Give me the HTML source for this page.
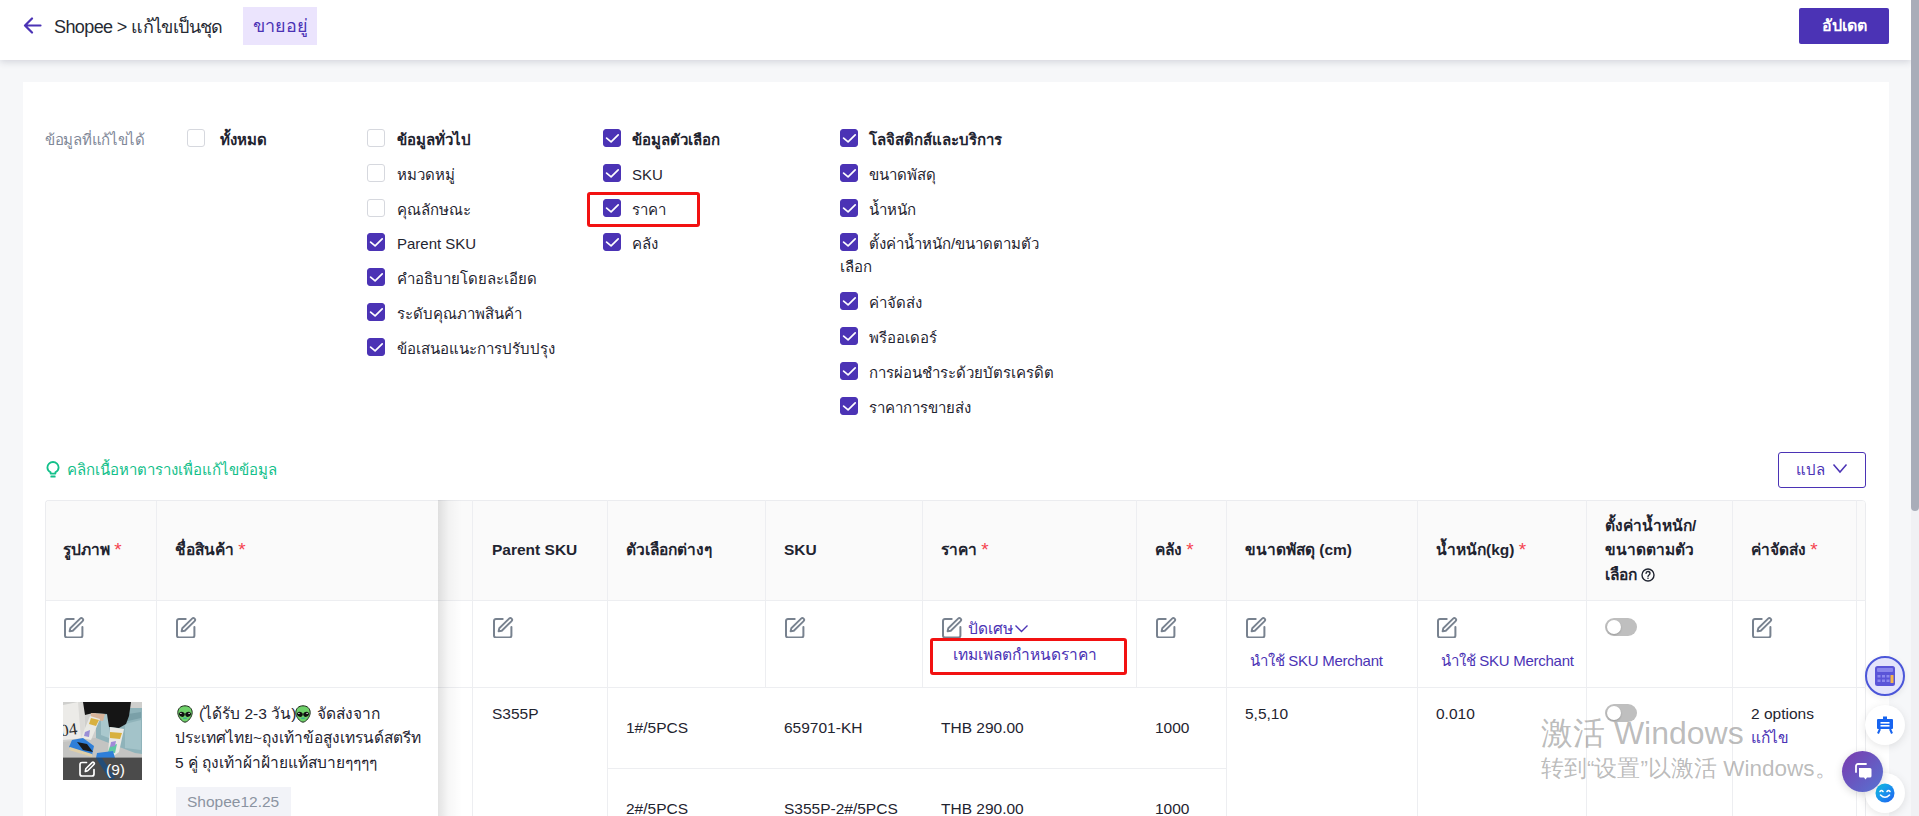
<!DOCTYPE html>
<html><head><meta charset="utf-8">
<style>
*{box-sizing:border-box;margin:0;padding:0}
html,body{width:1919px;height:816px;overflow:hidden}
body{position:relative;background:#f6f7f9;font-family:"Liberation Sans",sans-serif;color:#1f2430;font-size:15px}
.a{position:absolute;white-space:nowrap}
#hdr{left:0;top:0;width:1911px;height:60px;background:#fff;box-shadow:0 2px 7px rgba(30,40,70,.16);z-index:5}
#sb{left:1911px;top:0;width:8px;height:816px;background:#f0f1f4;z-index:6}
#thumb{left:0;top:0;width:8px;height:511px;background:#a9adb9;border-radius:0 0 4px 4px}
#card{left:23px;top:82px;width:1866px;height:740px;background:#fff}
.cb{position:absolute;width:18px;height:18px;border-radius:3px;border:1px solid #d6d8de;background:#fff}
.cb.on{background:#4b33b5;border-color:#4b33b5}
.lbl{position:absolute;white-space:nowrap;font-size:15px;line-height:20px;color:#1f2430;margin-top:2px}
.b{font-weight:bold}
.hl{height:1px;background:#edeef1}
.vl{width:1px;background:#edeef1}
.th{position:absolute;white-space:nowrap;font-size:15.5px;line-height:20px;font-weight:bold;color:#1f2430;margin-top:1px}
.req{color:#f5434f;font-size:19px;font-weight:normal;vertical-align:-1px}
.td{position:absolute;white-space:nowrap;font-size:15.5px;line-height:20px;color:#1f2430;margin-top:1px}
.tog{position:absolute;width:32px;height:18px;border-radius:9px;background:#bfbfbf}
.tog::after{content:"";position:absolute;left:2px;top:2px;width:14px;height:14px;border-radius:50%;background:#fff;box-shadow:0 1px 2px rgba(0,0,0,.2)}
</style></head><body>

<div id="hdr" class="a">
  <svg class="a" style="left:23px;top:17px" width="19" height="17" viewBox="0 0 19 17"><path d="M9 1.5 2 8.5l7 7M2.5 8.5H17.5" fill="none" stroke="#4b33b5" stroke-width="2.2" stroke-linecap="round" stroke-linejoin="round"/></svg>
  <div class="a" style="left:54px;top:16px;font-size:18px;line-height:22px;color:#262a33;letter-spacing:-0.6px">Shopee &gt; แก้ไขเป็นชุด</div>
  <div class="a" style="left:243px;top:7px;width:74px;height:38px;background:#ebe4fd;color:#4b33b5;font-size:18px;line-height:38px;text-align:center">ขายอยู่</div>
  <div class="a" style="left:1799px;top:8px;width:90px;height:36px;background:#4b33b5;border-radius:2px;color:#fff;font-size:16px;font-weight:bold;line-height:36px;text-align:center">อัปเดต</div>
</div>

<div id="card" class="a"></div>
<div class="lbl" style="left:45px;top:128px;color:#7f8898;letter-spacing:-0.3px">ข้อมูลที่แก้ไขได้</div>
<div class="cb" style="left:187px;top:129px"></div><div class="lbl b" style="left:220px;top:128px">ทั้งหมด</div>
<div class="cb" style="left:367px;top:129px"></div><div class="lbl b" style="left:397px;top:128px">ข้อมูลทั่วไป</div>
<div class="cb" style="left:367px;top:164px"></div><div class="lbl" style="left:397px;top:163px">หมวดหมู่</div>
<div class="cb" style="left:367px;top:199px"></div><div class="lbl" style="left:397px;top:198px">คุณลักษณะ</div>
<div class="cb on" style="left:367px;top:233px"><svg width="18" height="18" viewBox="0 0 18 18" style="position:absolute;left:-1px;top:-1px"><path d="M3.6 9.1 8.1 12.8 15.2 5.9" fill="none" stroke="#fff" stroke-width="1.7" stroke-linecap="round" stroke-linejoin="round"/></svg></div><div class="lbl" style="left:397px;top:232px">Parent SKU</div>
<div class="cb on" style="left:367px;top:268px"><svg width="18" height="18" viewBox="0 0 18 18" style="position:absolute;left:-1px;top:-1px"><path d="M3.6 9.1 8.1 12.8 15.2 5.9" fill="none" stroke="#fff" stroke-width="1.7" stroke-linecap="round" stroke-linejoin="round"/></svg></div><div class="lbl" style="left:397px;top:267px">คำอธิบายโดยละเอียด</div>
<div class="cb on" style="left:367px;top:303px"><svg width="18" height="18" viewBox="0 0 18 18" style="position:absolute;left:-1px;top:-1px"><path d="M3.6 9.1 8.1 12.8 15.2 5.9" fill="none" stroke="#fff" stroke-width="1.7" stroke-linecap="round" stroke-linejoin="round"/></svg></div><div class="lbl" style="left:397px;top:302px">ระดับคุณภาพสินค้า</div>
<div class="cb on" style="left:367px;top:338px"><svg width="18" height="18" viewBox="0 0 18 18" style="position:absolute;left:-1px;top:-1px"><path d="M3.6 9.1 8.1 12.8 15.2 5.9" fill="none" stroke="#fff" stroke-width="1.7" stroke-linecap="round" stroke-linejoin="round"/></svg></div><div class="lbl" style="left:397px;top:337px">ข้อเสนอแนะการปรับปรุง</div>
<div class="cb on" style="left:603px;top:129px"><svg width="18" height="18" viewBox="0 0 18 18" style="position:absolute;left:-1px;top:-1px"><path d="M3.6 9.1 8.1 12.8 15.2 5.9" fill="none" stroke="#fff" stroke-width="1.7" stroke-linecap="round" stroke-linejoin="round"/></svg></div><div class="lbl b" style="left:632px;top:128px">ข้อมูลตัวเลือก</div>
<div class="cb on" style="left:603px;top:164px"><svg width="18" height="18" viewBox="0 0 18 18" style="position:absolute;left:-1px;top:-1px"><path d="M3.6 9.1 8.1 12.8 15.2 5.9" fill="none" stroke="#fff" stroke-width="1.7" stroke-linecap="round" stroke-linejoin="round"/></svg></div><div class="lbl" style="left:632px;top:163px">SKU</div>
<div class="cb on" style="left:603px;top:199px"><svg width="18" height="18" viewBox="0 0 18 18" style="position:absolute;left:-1px;top:-1px"><path d="M3.6 9.1 8.1 12.8 15.2 5.9" fill="none" stroke="#fff" stroke-width="1.7" stroke-linecap="round" stroke-linejoin="round"/></svg></div><div class="lbl" style="left:632px;top:198px">ราคา</div>
<div class="cb on" style="left:603px;top:233px"><svg width="18" height="18" viewBox="0 0 18 18" style="position:absolute;left:-1px;top:-1px"><path d="M3.6 9.1 8.1 12.8 15.2 5.9" fill="none" stroke="#fff" stroke-width="1.7" stroke-linecap="round" stroke-linejoin="round"/></svg></div><div class="lbl" style="left:632px;top:232px">คลัง</div>
<div class="cb on" style="left:840px;top:129px"><svg width="18" height="18" viewBox="0 0 18 18" style="position:absolute;left:-1px;top:-1px"><path d="M3.6 9.1 8.1 12.8 15.2 5.9" fill="none" stroke="#fff" stroke-width="1.7" stroke-linecap="round" stroke-linejoin="round"/></svg></div><div class="lbl b" style="left:869px;top:128px">โลจิสติกส์และบริการ</div>
<div class="cb on" style="left:840px;top:164px"><svg width="18" height="18" viewBox="0 0 18 18" style="position:absolute;left:-1px;top:-1px"><path d="M3.6 9.1 8.1 12.8 15.2 5.9" fill="none" stroke="#fff" stroke-width="1.7" stroke-linecap="round" stroke-linejoin="round"/></svg></div><div class="lbl" style="left:869px;top:163px">ขนาดพัสดุ</div>
<div class="cb on" style="left:840px;top:199px"><svg width="18" height="18" viewBox="0 0 18 18" style="position:absolute;left:-1px;top:-1px"><path d="M3.6 9.1 8.1 12.8 15.2 5.9" fill="none" stroke="#fff" stroke-width="1.7" stroke-linecap="round" stroke-linejoin="round"/></svg></div><div class="lbl" style="left:869px;top:198px">น้ำหนัก</div>
<div class="cb on" style="left:840px;top:233px"><svg width="18" height="18" viewBox="0 0 18 18" style="position:absolute;left:-1px;top:-1px"><path d="M3.6 9.1 8.1 12.8 15.2 5.9" fill="none" stroke="#fff" stroke-width="1.7" stroke-linecap="round" stroke-linejoin="round"/></svg></div><div class="lbl" style="left:869px;top:232px">ตั้งค่าน้ำหนัก/ขนาดตามตัว</div>
<div class="cb on" style="left:840px;top:292px"><svg width="18" height="18" viewBox="0 0 18 18" style="position:absolute;left:-1px;top:-1px"><path d="M3.6 9.1 8.1 12.8 15.2 5.9" fill="none" stroke="#fff" stroke-width="1.7" stroke-linecap="round" stroke-linejoin="round"/></svg></div><div class="lbl" style="left:869px;top:291px">ค่าจัดส่ง</div>
<div class="cb on" style="left:840px;top:327px"><svg width="18" height="18" viewBox="0 0 18 18" style="position:absolute;left:-1px;top:-1px"><path d="M3.6 9.1 8.1 12.8 15.2 5.9" fill="none" stroke="#fff" stroke-width="1.7" stroke-linecap="round" stroke-linejoin="round"/></svg></div><div class="lbl" style="left:869px;top:326px">พรีออเดอร์</div>
<div class="cb on" style="left:840px;top:362px"><svg width="18" height="18" viewBox="0 0 18 18" style="position:absolute;left:-1px;top:-1px"><path d="M3.6 9.1 8.1 12.8 15.2 5.9" fill="none" stroke="#fff" stroke-width="1.7" stroke-linecap="round" stroke-linejoin="round"/></svg></div><div class="lbl" style="left:869px;top:361px">การผ่อนชำระด้วยบัตรเครดิต</div>
<div class="cb on" style="left:840px;top:397px"><svg width="18" height="18" viewBox="0 0 18 18" style="position:absolute;left:-1px;top:-1px"><path d="M3.6 9.1 8.1 12.8 15.2 5.9" fill="none" stroke="#fff" stroke-width="1.7" stroke-linecap="round" stroke-linejoin="round"/></svg></div><div class="lbl" style="left:869px;top:396px">ราคาการขายส่ง</div>
<div class="lbl" style="left:840px;top:255px">เลือก</div>
<div class="a" style="left:587px;top:192px;width:113px;height:35px;border:3px solid #f21111;border-radius:3px"></div>
<!-- tip -->
<svg class="a" style="left:46px;top:461px" width="14" height="18" viewBox="0 0 14 18"><path d="M4.6 12.6V11.3C2.7 10.3 1.4 8.6 1.4 6.5 1.4 3.4 3.9 1 7 1s5.6 2.4 5.6 5.5c0 2.1-1.3 3.8-3.2 4.8v1.3z" fill="none" stroke="#13c08a" stroke-width="1.8" stroke-linejoin="round"/><rect x="4.4" y="14.6" width="5.2" height="2" rx=".6" fill="#13c08a"/></svg>
<div class="lbl" style="left:67px;top:458px;color:#13c08a">คลิกเนื้อหาตารางเพื่อแก้ไขข้อมูล</div>
<div class="a" style="left:1778px;top:452px;width:88px;height:36px;border:1px solid #4b33b5;border-radius:3px"></div>
<div class="lbl" style="left:1796px;top:458px;color:#4b33b5">แปล</div>
<svg class="a" style="left:1832px;top:463px" width="16" height="11" viewBox="0 0 16 11"><path d="M1.5 1.5 8 9l6.5-7.5" fill="none" stroke="#4b33b5" stroke-width="1.5"/></svg>


<!--TABLE-->
<div class="a" style="left:45px;top:500px;width:1821px;height:330px;border:1px solid #ebecef;border-radius:4px 4px 0 0"></div>
<div class="a" style="left:46px;top:501px;width:1819px;height:99px;background:#fafafa;border-radius:3px 3px 0 0"></div>
<div class="a hl" style="left:45px;top:600px;width:1821px"></div>
<div class="a hl" style="left:45px;top:687px;width:1821px"></div>
<div class="a hl" style="left:608px;top:768px;width:618px"></div>
<div class="a vl" style="left:472px;top:500px;height:316px"></div>
<div class="a vl" style="left:607px;top:500px;height:316px"></div>
<div class="a vl" style="left:1226px;top:500px;height:316px"></div>
<div class="a vl" style="left:1417px;top:500px;height:316px"></div>
<div class="a vl" style="left:1586px;top:500px;height:316px"></div>
<div class="a vl" style="left:1732px;top:500px;height:316px"></div>
<div class="a vl" style="left:1856px;top:500px;height:316px"></div>
<div class="a vl" style="left:765px;top:500px;height:188px"></div>
<div class="a vl" style="left:922px;top:500px;height:188px"></div>
<div class="a vl" style="left:1136px;top:500px;height:188px"></div>
<div class="a" style="left:438px;top:500px;width:24px;height:316px;background:linear-gradient(to right,rgba(0,0,0,.11),rgba(0,0,0,.03) 45%,rgba(0,0,0,0))"></div>
<div class="a" style="left:45px;top:500px;width:393px;height:316px;border-left:1px solid #ebecef;border-top:1px solid #ebecef;border-radius:4px 0 0 0;background:#fff;overflow:hidden"><div class="a" style="left:0;top:0;width:400px;height:99px;background:#fafafa"></div><div class="a hl" style="left:0;top:99px;width:400px"></div><div class="a hl" style="left:0;top:186px;width:400px"></div><div class="a vl" style="left:110px;top:0;height:316px"></div></div>
<div class="th" style="left:63px;top:539px">รูปภาพ <span class="req">*</span></div>
<div class="th" style="left:175px;top:539px">ชื่อสินค้า <span class="req">*</span></div>
<div class="th" style="left:492px;top:539px">Parent SKU</div>
<div class="th" style="left:626px;top:539px">ตัวเลือกต่างๆ</div>
<div class="th" style="left:784px;top:539px">SKU</div>
<div class="th" style="left:941px;top:539px">ราคา <span class="req">*</span></div>
<div class="th" style="left:1155px;top:539px">คลัง <span class="req">*</span></div>
<div class="th" style="left:1245px;top:539px">ขนาดพัสดุ (cm)</div>
<div class="th" style="left:1436px;top:539px">น้ำหนัก(kg) <span class="req">*</span></div>
<div class="th" style="left:1751px;top:539px">ค่าจัดส่ง <span class="req">*</span></div>
<div class="th" style="left:1605px;top:515px">ตั้งค่าน้ำหนัก/</div>
<div class="th" style="left:1605px;top:539px">ขนาดตามตัว</div>
<div class="th" style="left:1605px;top:564px">เลือก <svg style="vertical-align:-2px" width="14" height="14" viewBox="0 0 14 14"><circle cx="7" cy="7" r="6" fill="none" stroke="#1f2430" stroke-width="1.4"/><path d="M5 5.4A2 2 0 0 1 9 5.6C9 6.9 7 7 7 8.4" fill="none" stroke="#1f2430" stroke-width="1.3" stroke-linecap="round"/><circle cx="7" cy="10.3" r=".8" fill="#1f2430"/></svg></div>
<svg class="a" style="left:63px;top:616px" width="22" height="22" viewBox="0 0 22 22"><path d="M10.7 2.9H4A2 2 0 0 0 2 4.9V19.5A2 2 0 0 0 4 21.5H17.4A2 2 0 0 0 19.4 19.5V11" fill="none" stroke="#78828f" stroke-width="2" stroke-linecap="round"/><path d="M6.6 15.3 7.3 12.3 17.1 2.6A1.75 1.75 0 0 1 19.6 5.1L9.8 14.7Z" fill="none" stroke="#78828f" stroke-width="1.9" stroke-linejoin="round"/></svg>
<svg class="a" style="left:175px;top:616px" width="22" height="22" viewBox="0 0 22 22"><path d="M10.7 2.9H4A2 2 0 0 0 2 4.9V19.5A2 2 0 0 0 4 21.5H17.4A2 2 0 0 0 19.4 19.5V11" fill="none" stroke="#78828f" stroke-width="2" stroke-linecap="round"/><path d="M6.6 15.3 7.3 12.3 17.1 2.6A1.75 1.75 0 0 1 19.6 5.1L9.8 14.7Z" fill="none" stroke="#78828f" stroke-width="1.9" stroke-linejoin="round"/></svg>
<svg class="a" style="left:492px;top:616px" width="22" height="22" viewBox="0 0 22 22"><path d="M10.7 2.9H4A2 2 0 0 0 2 4.9V19.5A2 2 0 0 0 4 21.5H17.4A2 2 0 0 0 19.4 19.5V11" fill="none" stroke="#78828f" stroke-width="2" stroke-linecap="round"/><path d="M6.6 15.3 7.3 12.3 17.1 2.6A1.75 1.75 0 0 1 19.6 5.1L9.8 14.7Z" fill="none" stroke="#78828f" stroke-width="1.9" stroke-linejoin="round"/></svg>
<svg class="a" style="left:784px;top:616px" width="22" height="22" viewBox="0 0 22 22"><path d="M10.7 2.9H4A2 2 0 0 0 2 4.9V19.5A2 2 0 0 0 4 21.5H17.4A2 2 0 0 0 19.4 19.5V11" fill="none" stroke="#78828f" stroke-width="2" stroke-linecap="round"/><path d="M6.6 15.3 7.3 12.3 17.1 2.6A1.75 1.75 0 0 1 19.6 5.1L9.8 14.7Z" fill="none" stroke="#78828f" stroke-width="1.9" stroke-linejoin="round"/></svg>
<svg class="a" style="left:941px;top:616px" width="22" height="22" viewBox="0 0 22 22"><path d="M10.7 2.9H4A2 2 0 0 0 2 4.9V19.5A2 2 0 0 0 4 21.5H17.4A2 2 0 0 0 19.4 19.5V11" fill="none" stroke="#78828f" stroke-width="2" stroke-linecap="round"/><path d="M6.6 15.3 7.3 12.3 17.1 2.6A1.75 1.75 0 0 1 19.6 5.1L9.8 14.7Z" fill="none" stroke="#78828f" stroke-width="1.9" stroke-linejoin="round"/></svg>
<svg class="a" style="left:1155px;top:616px" width="22" height="22" viewBox="0 0 22 22"><path d="M10.7 2.9H4A2 2 0 0 0 2 4.9V19.5A2 2 0 0 0 4 21.5H17.4A2 2 0 0 0 19.4 19.5V11" fill="none" stroke="#78828f" stroke-width="2" stroke-linecap="round"/><path d="M6.6 15.3 7.3 12.3 17.1 2.6A1.75 1.75 0 0 1 19.6 5.1L9.8 14.7Z" fill="none" stroke="#78828f" stroke-width="1.9" stroke-linejoin="round"/></svg>
<svg class="a" style="left:1245px;top:616px" width="22" height="22" viewBox="0 0 22 22"><path d="M10.7 2.9H4A2 2 0 0 0 2 4.9V19.5A2 2 0 0 0 4 21.5H17.4A2 2 0 0 0 19.4 19.5V11" fill="none" stroke="#78828f" stroke-width="2" stroke-linecap="round"/><path d="M6.6 15.3 7.3 12.3 17.1 2.6A1.75 1.75 0 0 1 19.6 5.1L9.8 14.7Z" fill="none" stroke="#78828f" stroke-width="1.9" stroke-linejoin="round"/></svg>
<svg class="a" style="left:1436px;top:616px" width="22" height="22" viewBox="0 0 22 22"><path d="M10.7 2.9H4A2 2 0 0 0 2 4.9V19.5A2 2 0 0 0 4 21.5H17.4A2 2 0 0 0 19.4 19.5V11" fill="none" stroke="#78828f" stroke-width="2" stroke-linecap="round"/><path d="M6.6 15.3 7.3 12.3 17.1 2.6A1.75 1.75 0 0 1 19.6 5.1L9.8 14.7Z" fill="none" stroke="#78828f" stroke-width="1.9" stroke-linejoin="round"/></svg>
<svg class="a" style="left:1751px;top:616px" width="22" height="22" viewBox="0 0 22 22"><path d="M10.7 2.9H4A2 2 0 0 0 2 4.9V19.5A2 2 0 0 0 4 21.5H17.4A2 2 0 0 0 19.4 19.5V11" fill="none" stroke="#78828f" stroke-width="2" stroke-linecap="round"/><path d="M6.6 15.3 7.3 12.3 17.1 2.6A1.75 1.75 0 0 1 19.6 5.1L9.8 14.7Z" fill="none" stroke="#78828f" stroke-width="1.9" stroke-linejoin="round"/></svg>
<div class="td" style="left:968px;top:618px;color:#4b33b5">ปัดเศษ</div>
<svg class="a" style="left:1014px;top:624px" width="15" height="9" viewBox="0 0 15 9"><path d="M1.5 1.5 7.5 7.5 13.5 1.5" fill="none" stroke="#4b33b5" stroke-width="1.4"/></svg>
<div class="a" style="left:930px;top:638px;width:197px;height:37px;border:3px solid #f21111;border-radius:3px"></div>
<div class="td" style="left:953px;top:644px;color:#4b33b5">เทมเพลตกำหนดราคา</div>
<div class="td" style="left:1250px;top:650px;color:#4b33b5;font-size:15px;letter-spacing:-0.25px">นำใช้ SKU Merchant</div>
<div class="td" style="left:1441px;top:650px;color:#4b33b5;font-size:15px;letter-spacing:-0.25px">นำใช้ SKU Merchant</div>
<div class="tog" style="left:1605px;top:618px"></div>
<svg class="a" style="left:63px;top:702px" width="79" height="78" viewBox="0 0 79 78">
<rect width="79" height="78" fill="#cfcfcd"/>
<path d="M0 40 79 30V78H0Z" fill="#c4c4c2"/>
<path d="M33 6H79V52L72 51 33 36Z" fill="#8fb3ba"/>
<path d="M38 14 46 12 46 36 38 33Z" fill="#a9c8cd"/><path d="M62 22 78 18 78 48 62 46Z" fill="#a3c3c9"/>
<path d="M52 14 78 10V16L52 22Z" fill="#7aa0a8"/>
<path d="M0 3 15 0 21 2 22 36 0 38Z" fill="#ecebe8"/>
<path d="M15 0 21 2 22 36 18 37Z" fill="#dcdbd8"/>
<text x="-3" y="33" font-family="Liberation Serif" font-size="17" fill="#2a2a2a" transform="rotate(-8 8 26)">04</text>
<path d="M20 0H68L66 14 63 22 56 26 46 25 44 12 30 11 22 13Z" fill="#151515"/>
<path d="M28 11 42 12 40 19 28 18Z" fill="#d7b49a"/>
<path d="M27 14 37 17 28 38 18 36Z" fill="#e9e9e4"/>
<path d="M28 16 36 18 33 24 26 22Z" fill="#d8b13f"/><path d="M22 30 27 28 26 35 21 34Z" fill="#9a8fd6"/>
<path d="M47 25 61 27 56 50 48 56 45 52Z" fill="#e9e9e4"/>
<path d="M47 30 59 31 57 37 47 36Z" fill="#d8b13f"/><path d="M47 44 54 42 52 51 45 50Z" fill="#5fc7a4"/><path d="M48 40 53 39 52 44 47 45Z" fill="#a08ad8"/>
<path d="M20 36 9 38 6 45 20 52 29 53 31 44Z" fill="#2f7fd8"/>
<path d="M14 40 24 42 30 50 20 48Z" fill="#1a1a1a"/><path d="M7 45 29 52 29 55 6 48Z" fill="#dfcfa8"/>
<path d="M34 51 50 49 52 56 33 56Z" fill="#2f7fd8"/>
<rect y="55.6" width="79" height="22.4" fill="#4b4b4b"/>
<path d="M33 56 39 56 52 76 47 78Z" fill="#234d78"/>
<path d="M23.5 60.5H19A2 2 0 0 0 17 62.5V72A2 2 0 0 0 19 74H29A2 2 0 0 0 31 72V67.5" fill="none" stroke="#fff" stroke-width="1.7" stroke-linecap="round"/>
<path d="M22.3 69.5 22.8 66.8 29 60.6A1.3 1.3 0 0 1 30.9 62.5L24.7 68.7Z" fill="none" stroke="#fff" stroke-width="1.6" stroke-linejoin="round"/>
<text x="43" y="73" font-family="Liberation Sans" font-size="15.5" fill="#fff">(9)</text>
</svg>
<svg class="a" style="left:177px;top:705px" width="16" height="18" viewBox="0 0 16 18"><path d="M8 .8C3.6.8.8 3.6.8 7.6.8 11.6 4.6 16.8 8 17.2 11.4 16.8 15.2 11.6 15.2 7.6 15.2 3.6 12.4.8 8 .8Z" fill="#6fd16a" stroke="#1d2a1b" stroke-width="1"/><ellipse cx="4.9" cy="9.3" rx="2.9" ry="2.4" fill="#111" transform="rotate(25 4.9 9.3)"/><ellipse cx="11.1" cy="9.3" rx="2.9" ry="2.4" fill="#111" transform="rotate(-25 11.1 9.3)"/><circle cx="3.9" cy="8.4" r=".7" fill="#fff"/><circle cx="12.1" cy="8.4" r=".7" fill="#fff"/><path d="M6.2 13.2H9.8" stroke="#2aa6a0" stroke-width="1.1"/></svg><div class="td" style="left:199px;top:703px">(ได้รับ 2-3 วัน)</div><svg class="a" style="left:295px;top:705px" width="16" height="18" viewBox="0 0 16 18"><path d="M8 .8C3.6.8.8 3.6.8 7.6.8 11.6 4.6 16.8 8 17.2 11.4 16.8 15.2 11.6 15.2 7.6 15.2 3.6 12.4.8 8 .8Z" fill="#6fd16a" stroke="#1d2a1b" stroke-width="1"/><ellipse cx="4.9" cy="9.3" rx="2.9" ry="2.4" fill="#111" transform="rotate(25 4.9 9.3)"/><ellipse cx="11.1" cy="9.3" rx="2.9" ry="2.4" fill="#111" transform="rotate(-25 11.1 9.3)"/><circle cx="3.9" cy="8.4" r=".7" fill="#fff"/><circle cx="12.1" cy="8.4" r=".7" fill="#fff"/><path d="M6.2 13.2H9.8" stroke="#2aa6a0" stroke-width="1.1"/></svg><div class="td" style="left:317px;top:703px">จัดส่งจาก</div>
<div class="td" style="left:175px;top:727px">ประเทศไทย~ถุงเท้าข้อสูงเทรนด์สตรีท</div>
<div class="td" style="left:175px;top:752px">5 คู่ ถุงเท้าผ้าฝ้ายแท้สบายๆๆๆๆ</div>
<div class="a" style="left:176px;top:787px;width:115px;height:32px;background:#f2f3f8"></div>
<div class="td" style="left:187px;top:791px;color:#8b93a1">Shopee12.25</div>
<div class="td" style="left:492px;top:703px">S355P</div>
<div class="td" style="left:626px;top:717px">1#/5PCS</div>
<div class="td" style="left:784px;top:717px">659701-KH</div>
<div class="td" style="left:941px;top:717px">THB 290.00</div>
<div class="td" style="left:1155px;top:717px">1000</div>
<div class="td" style="left:626px;top:798px">2#/5PCS</div>
<div class="td" style="left:784px;top:798px">S355P-2#/5PCS</div>
<div class="td" style="left:941px;top:798px">THB 290.00</div>
<div class="td" style="left:1155px;top:798px">1000</div>
<div class="td" style="left:1245px;top:703px">5,5,10</div>
<div class="td" style="left:1436px;top:703px">0.010</div>
<div class="tog" style="left:1605px;top:704px"></div>
<div class="td" style="left:1751px;top:703px">2 options</div>
<div class="td" style="left:1751px;top:727px;color:#4b33b5">แก้ไข</div>
<!--/TABLE-->

<!-- watermark -->
<div class="a" style="left:1541px;top:713px;font-size:32px;line-height:40px;color:rgba(105,105,105,.46)">激活 Windows</div>
<div class="a" style="left:1541px;top:755px;font-size:22.5px;line-height:28px;color:rgba(105,105,105,.46)">转到“设置”以激活 Windows。</div>
<!-- floating -->
<div class="a" style="left:1865px;top:656px;width:40px;height:40px;border-radius:50%;background:#e4e4fb;border:2px solid #4b56d9;box-shadow:0 2px 6px rgba(0,0,0,.08)"></div>
<svg class="a" style="left:1875px;top:666px" width="20" height="20" viewBox="0 0 20 20"><rect x="0" y="0" width="20" height="20" rx="2.5" fill="#5a54d8"/><rect x="2" y="2" width="16" height="4" rx="1" fill="#8a86ec"/><g fill="#8c88ee"><rect x="2.5" y="9" width="3" height="2.5"/><rect x="7" y="9" width="3" height="2.5"/><rect x="11.5" y="9" width="3" height="2.5"/><rect x="2.5" y="13.5" width="3" height="2.5"/><rect x="7" y="13.5" width="3" height="2.5"/><rect x="11.5" y="13.5" width="3" height="2.5"/></g><rect x="15.5" y="9" width="3" height="8" rx=".5" fill="#f6b54a"/></svg>
<div class="a" style="left:1865px;top:705px;width:40px;height:40px;border-radius:50%;background:#fff;box-shadow:0 2px 8px rgba(0,0,0,.10)"></div>
<svg class="a" style="left:1876px;top:716px" width="18" height="18" viewBox="0 0 18 18"><rect x="1" y="3" width="16" height="10" rx="1" fill="#1764f0"/><rect x="7" y="0.5" width="4" height="3" fill="#1764f0"/><rect x="4.5" y="6" width="9" height="1.6" fill="#fff"/><rect x="4.5" y="9" width="9" height="1.6" fill="#fff"/><path d="M4 13 2 17.5M14 13 16 17.5" stroke="#1764f0" stroke-width="2"/></svg>
<div class="a" style="left:1865px;top:773px;width:40px;height:40px;border-radius:50%;background:#fff;box-shadow:0 2px 8px rgba(0,0,0,.10)"></div>
<svg class="a" style="left:1875px;top:783px" width="20" height="20" viewBox="0 0 20 20"><defs><linearGradient id="sg" x1="0" y1="0" x2="1" y2="1"><stop offset="0" stop-color="#12c8e8"/><stop offset="1" stop-color="#1f5cf0"/></linearGradient></defs><circle cx="10" cy="10" r="9.5" fill="url(#sg)"/><path d="M5 8.5Q6.5 6.5 8 8.5M12 8.5Q13.5 6.5 15 8.5M5.5 12Q10 16.5 14.5 12" fill="none" stroke="#fff" stroke-width="1.6" stroke-linecap="round"/></svg>
<div class="a" style="left:1842px;top:751px;width:41px;height:41px;border-radius:50%;background:linear-gradient(135deg,#7b3aae,#5674d2);box-shadow:0 2px 8px rgba(0,0,0,.15)"></div>
<svg class="a" style="left:1853px;top:762px" width="20" height="19" viewBox="0 0 20 19"><path d="M3 10V4A2 2 0 0 1 5 2H13" fill="none" stroke="#fff" stroke-width="1.8" stroke-linecap="round"/><path d="M6 6H17A1.5 1.5 0 0 1 18.5 7.5V14A1.5 1.5 0 0 1 17 15.5H14L12.5 17.5 11 15.5H7.5A1.5 1.5 0 0 1 6 14Z" fill="#fff"/></svg>
<div id="sb" class="a"><div id="thumb" class="a"></div></div>

</body></html>
